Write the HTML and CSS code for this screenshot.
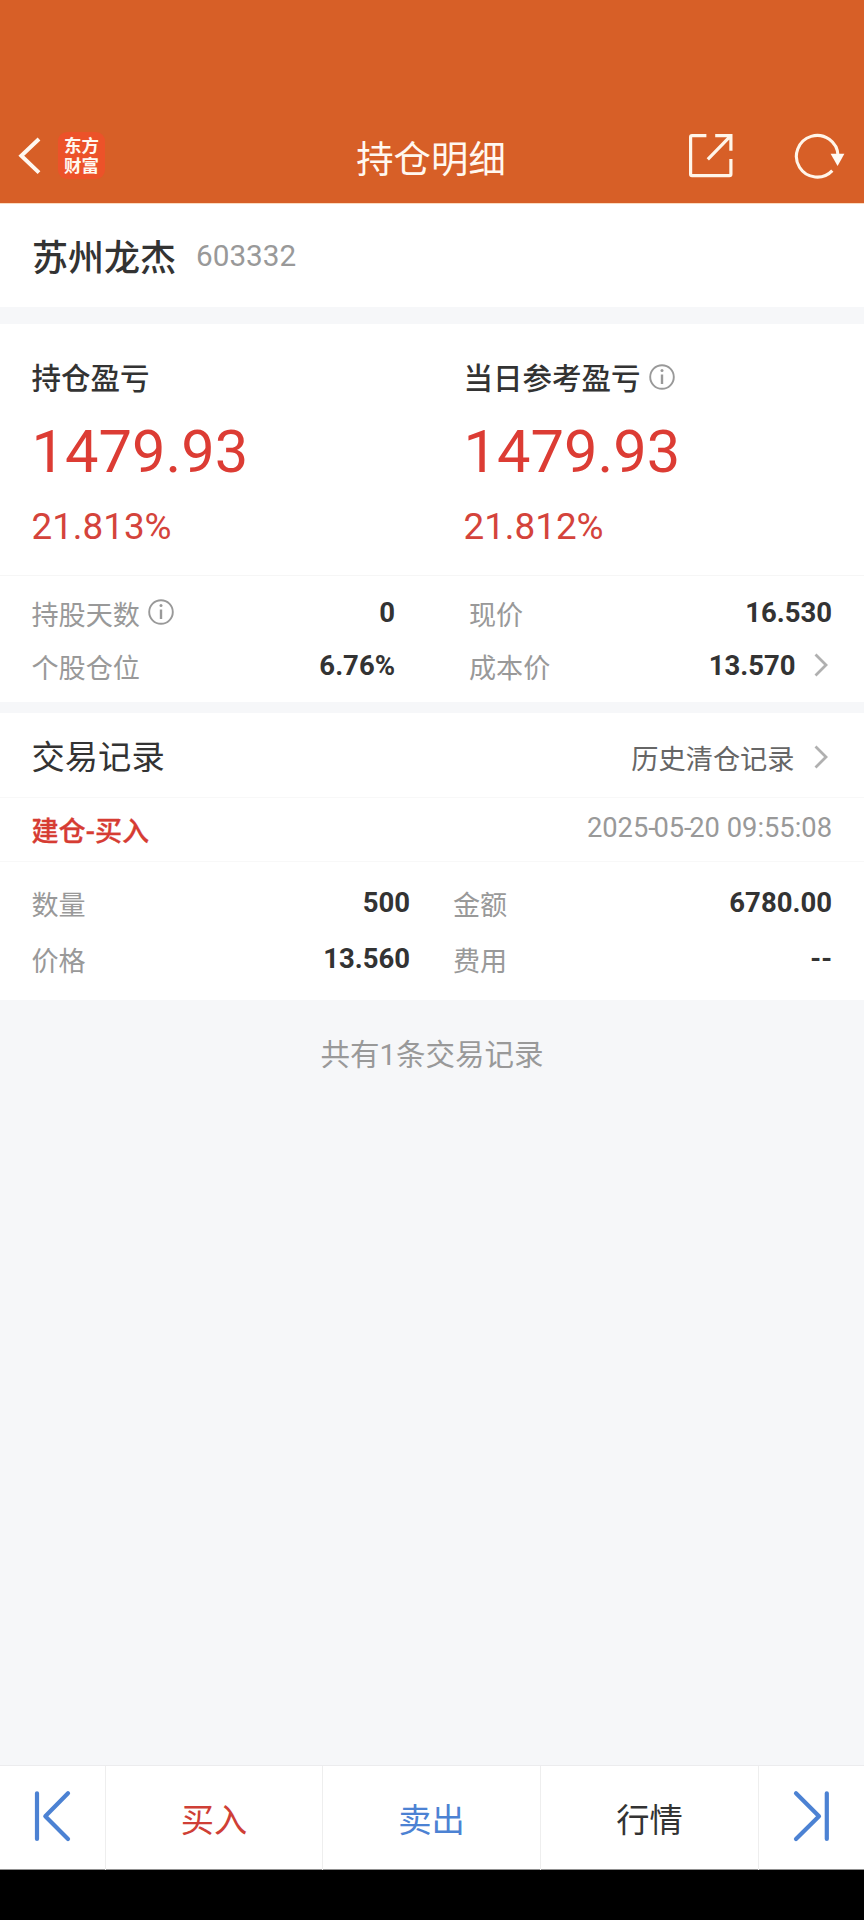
FILE: index.html
```html
<!DOCTYPE html>
<html lang="zh-CN">
<head>
<meta charset="utf-8">
<title>持仓明细</title>
<link rel="stylesheet" href="styles.css">
</head>
<body>
<div class="app">
  <header class="topbar">
    <div class="topbar-left">
      <svg class="icon-back" width="24" height="42" viewBox="0 0 24 42" fill="none" stroke="#fff8f0" stroke-width="4"><path d="M22 4 4.3 20.8 22 37.6"/></svg>
      <div class="logo"><span>东方</span><span>财富</span></div>
    </div>
    <h1 class="title">持仓明细</h1>
    <div class="topbar-right">
      <svg width="46" height="46" viewBox="0 0 46 46" fill="none" stroke="#fff5e9" stroke-width="3.2"><path d="M18.4 2.6H4Q2.6 2.6 2.6 4V41.2Q2.6 42.6 4 42.6H41.5Q42.9 42.6 42.9 41.2V26M27.2 2.6H42.9V17.8M42.4 3.1 19.8 26.3"/></svg>
      <svg width="52" height="46" viewBox="0 0 52 46" fill="none" stroke="#fff5e9" stroke-width="3.1"><path d="M39.3 37.6A20.8 20.8 0 1 1 45 22.5"/><path d="M37.6 20.7H51.4L44.6 33Z" fill="#fffaf4" stroke="none"/></svg>
    </div>
  </header>

  <section class="stock">
    <span class="stock-name">苏州龙杰</span>
    <span class="stock-code">603332</span>
  </section>

  <section class="profit">
    <div class="profit-col">
      <div class="profit-label">持仓盈亏</div>
      <div class="profit-value">1479.93</div>
      <div class="profit-rate">21.813%</div>
    </div>
    <div class="profit-col">
      <div class="profit-label">当日参考盈亏
        <svg class="info" width="26" height="26" viewBox="0 0 26 26" fill="none" stroke="#999" stroke-width="1.9"><circle cx="13" cy="13" r="11.8"/><path d="M13 10.5V20" stroke-width="2.4"/><circle cx="13" cy="6.6" r="1.5" fill="#999" stroke="none"/></svg>
      </div>
      <div class="profit-value">1479.93</div>
      <div class="profit-rate">21.812%</div>
    </div>
  </section>

  <section class="stats">
    <div class="stats-col stats-left">
      <div class="row"><span class="key">持股天数
        <svg class="info" width="26" height="26" viewBox="0 0 26 26" fill="none" stroke="#999" stroke-width="1.9"><circle cx="13" cy="13" r="11.8"/><path d="M13 10.5V20" stroke-width="2.4"/><circle cx="13" cy="6.6" r="1.5" fill="#999" stroke="none"/></svg>
      </span><span class="val">0</span></div>
      <div class="row"><span class="key">个股仓位</span><span class="val">6.76%</span></div>
    </div>
    <div class="stats-col stats-right">
      <div class="row"><span class="key">现价</span><span class="val">16.530</span></div>
      <div class="row"><span class="key">成本价</span><span class="val">13.570<svg class="chev" width="16" height="26" viewBox="0 0 16 26" fill="none" stroke="#b0b0b0" stroke-width="2.8"><path d="M2.5 2.5 13 13 2.5 23.5"/></svg></span></div>
    </div>
  </section>

  <section class="records-head">
    <h2 class="records-title">交易记录</h2>
    <a class="history">历史清仓记录<svg class="chev" width="16" height="26" viewBox="0 0 16 26" fill="none" stroke="#b0b0b0" stroke-width="2.8"><path d="M2.5 2.5 13 13 2.5 23.5"/></svg></a>
  </section>

  <section class="record-bar">
    <span class="record-type">建仓-买入</span>
    <time class="record-time">2025<span class="dash">-</span>05<span class="dash">-</span>20 09:55:08</time>
  </section>

  <section class="detail">
    <div class="detail-col detail-left">
      <div class="row"><span class="key">数量</span><span class="val">500</span></div>
      <div class="row"><span class="key">价格</span><span class="val">13.560</span></div>
    </div>
    <div class="detail-col detail-right">
      <div class="row"><span class="key">金额</span><span class="val">6780.00</span></div>
      <div class="row"><span class="key">费用</span><span class="val">--</span></div>
    </div>
  </section>

  <p class="summary">共有1条交易记录</p>

  <nav class="actions">
    <a class="action"><svg width="105" height="100" viewBox="0 0 105 100" fill="none" stroke="#4c82d3" stroke-width="4.2" stroke-linecap="round" stroke-linejoin="round"><path d="M37 27.3V73M68 27.3 45.3 50.2 68 73"/></svg></a>
    <a class="action buy">买入</a>
    <a class="action sell">卖出</a>
    <a class="action">行情</a>
    <a class="action"><svg width="105" height="100" viewBox="0 0 105 100" fill="none" stroke="#4c82d3" stroke-width="4.2" stroke-linecap="round" stroke-linejoin="round"><path d="M67.8 27.3V73M37 27.3 60 50.2 37 73"/></svg></a>
  </nav>
  <div class="system-bar"></div>
</div>
</body>
</html>
```
FILE: styles.css
```css
* { box-sizing: border-box; margin: 0; padding: 0; }
body {
  width: 864px;
  background: #f6f7f9;
  color: #333;
  font-family: Roboto, "Noto Sans CJK SC", sans-serif;
}
svg { display: block; flex: none; }
.app { display: flex; flex-direction: column; height: 1920px; }

.topbar {
  display: grid;
  grid-template-columns: 1fr auto 1fr;
  height: 204px;
  padding: 110px 19px 0 17px;
  background: #d75f27;
  border-bottom: 1px solid #fbdcc0;
  color: #fff8f0;
}
.topbar-left { display: flex; padding-top: 22px; }
.icon-back { margin-top: 3px; }
.logo {
  display: flex;
  flex-direction: column;
  align-items: center;
  width: 47px;
  height: 47px;
  margin-left: 17px;
  padding-top: 4px;
  border-radius: 9px;
  background: #ec5229;
  font-size: 17.5px;
  font-weight: 700;
  line-height: 20px;
}
.title { font-size: 37.4px; font-weight: 400; line-height: 100px; }
.topbar-right { display: flex; justify-content: flex-end; gap: 59px; padding-top: 23px; }

.stock {
  display: flex;
  align-items: center;
  gap: 20px;
  height: 103px;
  padding-left: 32px;
  background: #fff;
}
.stock-name { padding-bottom: 1px; font-size: 36px; font-weight: 500; }
.stock-code { padding-bottom: 1px; font-size: 29.7px; color: #999; }

.profit {
  display: grid;
  grid-template-columns: 1fr 1fr;
  height: 252px;
  margin-top: 17px;
  border-bottom: 1px solid #f6f6f6;
  background: #fff;
}
.profit-col { padding: 35px 0 0 31.5px; }
.profit-label {
  display: flex;
  gap: 8.5px;
  height: 40px;
  font-size: 29.5px;
  font-weight: 500;
  line-height: 40px;
}
.profit-label .info { margin-top: 5px; }
.profit-value { height: 72px; margin-top: 17px; font-size: 59.6px; line-height: 72px; color: #dc3c34; }
.profit-rate { height: 44px; margin-top: 17px; font-size: 36.8px; line-height: 44px; color: #d4433b; }

.stats { display: flex; height: 126px; padding: 11px 32px 0 31.5px; background: #fff; }
.stats-left { width: 363.5px; }
.stats-right { flex: 1; margin-left: 74px; }
.row { display: flex; justify-content: space-between; height: 52.6px; line-height: 52px; }
.key { display: flex; gap: 8.5px; padding-top: 3px; font-size: 27.1px; color: #999; }
.key .info { margin-top: 9px; }
.val { display: flex; font-size: 27.5px; font-weight: 700; }
.chev { margin: 12px 3.5px 0 17px; }

.records-head {
  display: flex;
  justify-content: space-between;
  height: 85px;
  margin-top: 11px;
  padding: 0 32px 0 31.5px;
  border-bottom: 1px solid #f8f8f8;
  background: #fff;
}
.records-title { font-size: 33.3px; font-weight: 400; line-height: 90px; }
.history { display: flex; font-size: 27.2px; line-height: 94px; color: #666; }
.history .chev { margin-top: 31px; margin-left: 18px; }

.record-bar {
  display: flex;
  justify-content: space-between;
  height: 64px;
  padding: 0 32px 0 31.5px;
  border-bottom: 1px solid #f8f8f8;
  background: #fff;
}
.record-type { font-size: 27.1px; font-weight: 500; line-height: 68px; color: #d63c33; -webkit-text-stroke: 0.3px #d63c33; }
.record-time { font-size: 27.3px; line-height: 61px; color: #999; }
.dash { letter-spacing: -2.4px; }

.detail { display: flex; height: 138px; padding: 14.5px 32px 0 31.5px; background: #fff; }
.detail .row { height: 56.8px; }
.detail-left { width: 378.5px; }
.detail-right { flex: 1; margin-left: 43px; }

.summary { margin-top: 35px; font-size: 29.5px; line-height: 40px; text-align: center; color: #999; }

.actions {
  display: grid;
  grid-template-columns: 106px 217px 218px 218px 105px;
  height: 105px;
  margin-top: auto;
  border-top: 1px solid #ececee;
  border-bottom: 1px solid #909090;
  background: #fff;
}
.action {
  border-right: 1px solid #eee;
  font-size: 33.3px;
  line-height: 110px;
  text-align: center;
}
.action:last-child { border-right: 0; }
.buy { color: #cf3f36; }
.sell { color: #4c82d3; }
.system-bar { height: 50px; background: #000; }
```
